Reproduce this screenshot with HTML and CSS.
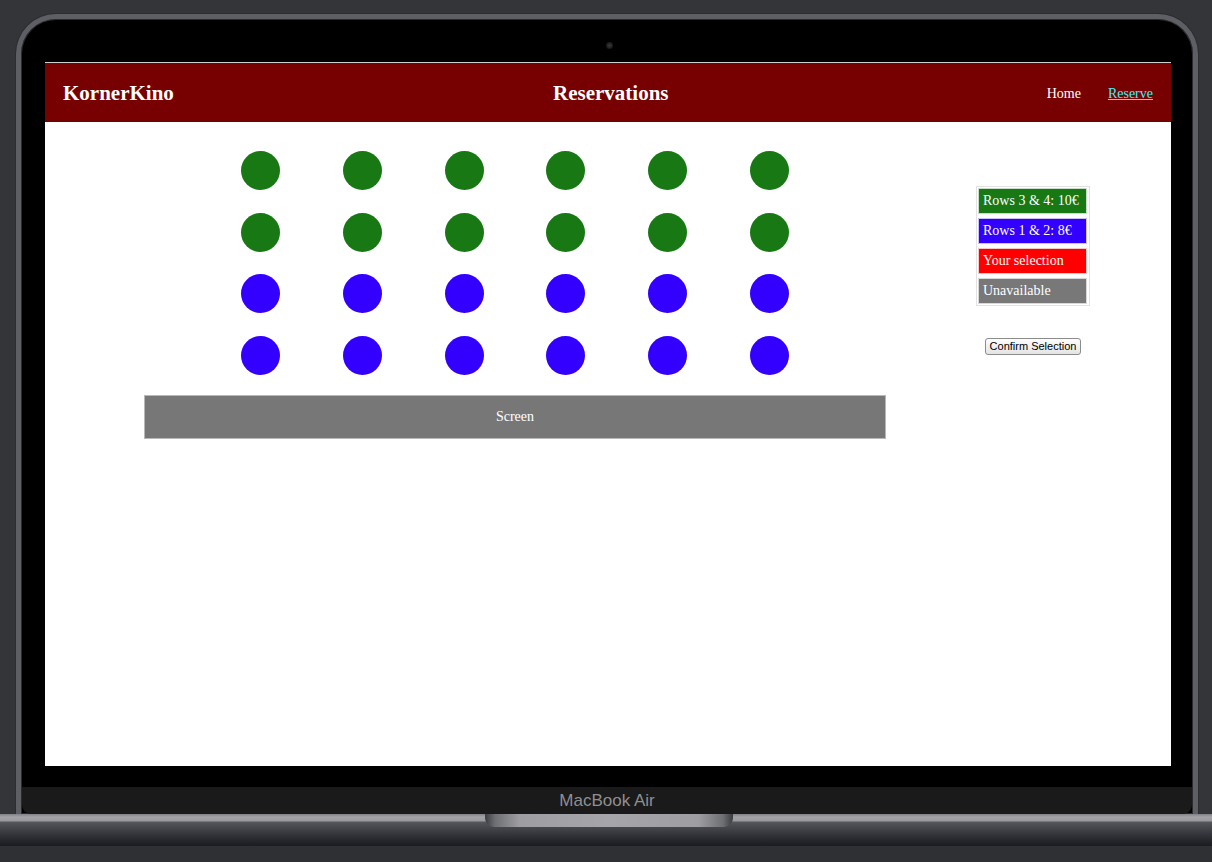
FILE: index.html
```html
<!DOCTYPE html>
<html lang="en">
<head>
<meta charset="utf-8">
<title>KornerKino – Reservations</title>
<link rel="stylesheet" href="styles.css">
</head>
<body>
<div class="desk">
  <div class="lid">
    <div class="bezel-top"><div class="camera"></div></div>
    <div class="screen">
      <header class="topbar">
        <div class="brand">KornerKino</div>
        <div class="title">Reservations</div>
        <nav class="nav">
          <a class="nav-link" href="#">Home</a>
          <a class="nav-link active" href="#">Reserve</a>
        </nav>
      </header>
      <main class="content">
        <section class="hall">
          <div class="seats">
            <span class="seat premium"></span><span class="seat premium"></span><span class="seat premium"></span><span class="seat premium"></span><span class="seat premium"></span><span class="seat premium"></span>
            <span class="seat premium"></span><span class="seat premium"></span><span class="seat premium"></span><span class="seat premium"></span><span class="seat premium"></span><span class="seat premium"></span>
            <span class="seat standard"></span><span class="seat standard"></span><span class="seat standard"></span><span class="seat standard"></span><span class="seat standard"></span><span class="seat standard"></span>
            <span class="seat standard"></span><span class="seat standard"></span><span class="seat standard"></span><span class="seat standard"></span><span class="seat standard"></span><span class="seat standard"></span>
          </div>
          <div class="screen-bar">Screen</div>
        </section>
        <aside class="side">
          <div class="legend">
            <div class="legend-item premium">Rows 3 &amp; 4: 10€</div>
            <div class="legend-item standard">Rows 1 &amp; 2: 8€</div>
            <div class="legend-item selected">Your selection</div>
            <div class="legend-item unavailable">Unavailable</div>
          </div>
          <button class="confirm" type="button">Confirm Selection</button>
        </aside>
      </main>
    </div>
    <div class="chin"><span class="model">MacBook Air</span></div>
  </div>
  <div class="base"><div class="notch"></div></div>
  <div class="floor"></div>
</div>
</body>
</html>
```

FILE: styles.css
```css
* { box-sizing: border-box; }

html, body {
  margin: 0;
  padding: 0;
  background: #343538;
  width: 1212px;
  height: 862px;
  overflow: hidden;
}

.desk {
  padding-top: 14px;
}

.lid {
  margin: 0 14px 0 16px;
  border: 5px solid #5e5f64;
  border-bottom: 0;
  border-radius: 40px 40px 0 0;
  background: #000;
  box-shadow: inset 0 0 0 1px #2a2b2e, 0 0 0 1px #2c2d30;
}

.bezel-top {
  height: 43px;
  padding-top: 23px;
  display: flex;
  justify-content: center;
}

.camera {
  width: 7px;
  height: 7px;
  border-radius: 50%;
  background: radial-gradient(circle at 50% 50%, #3a3a3c 0, #1c1c1e 60%, #0c0c0c 100%);
  margin-left: 4px;
}

.screen {
  margin: 0 22px 21px 24px;
  height: 704px;
  background: #fff;
  border-top: 1px solid #cfcfcf;
  overflow: hidden;
  font-family: "Liberation Serif", "Times New Roman", serif;
}

.topbar {
  height: 59px;
  background: #770000;
  display: flex;
  justify-content: space-between;
  align-items: center;
  padding: 2px 18px 0;
  color: #fff;
}

.brand,
.title {
  font-size: 21px;
  font-weight: bold;
}

.title { padding-left: 1px; }

.nav {
  display: flex;
  gap: 27px;
  font-size: 14px;
}

.nav-link {
  color: #fff;
  text-decoration: none;
}

.nav-link.active {
  color: #45eef2;
  text-decoration: underline;
}

.content {
  display: flex;
}

.hall {
  flex: none;
  width: 850px;
  padding: 29px 0 0 90px;
}

.seats {
  display: grid;
  grid-template-columns: repeat(6, 39px);
  column-gap: 62.8px;
  row-gap: 22.5px;
  width: 548px;
  margin: 0 auto;
}

.seat {
  width: 39px;
  height: 39px;
  border-radius: 50%;
}

.seat.premium { background: #187814; }
.seat.standard { background: #3300ff; }

.screen-bar {
  width: 742px;
  height: 44px;
  margin: 20.5px auto 0;
  background: #777;
  border: 1px solid #b8b8b8;
  color: #fff;
  font-size: 14px;
  line-height: 42px;
  text-align: center;
}

.side {
  flex: 1;
  display: flex;
  flex-direction: column;
  align-items: center;
  padding-top: 64px;
}

.legend {
  width: 114px;
  border: 1px solid #e2e2e2;
  padding: 1px 2px 1px 1px;
  display: flex;
  flex-direction: column;
  gap: 4px;
}

.legend-item {
  height: 26px;
  border: 1px solid #d6d6d6;
  padding-left: 4px;
  color: #fff;
  font-size: 14px;
  line-height: 24px;
  white-space: nowrap;
}

.legend-item.premium { background: #187814; border-color: #c9dcc8; }
.legend-item.standard { background: #3300ff; border-color: #c9c2f5; }
.legend-item.selected { background: #ff0000; border-color: #f5c8c8; }
.legend-item.unavailable { background: #787878; border-color: #d8d8d8; }

.confirm {
  margin-top: 32px;
  height: 17px;
  padding: 0 4px;
  font-family: "Liberation Sans", Arial, sans-serif;
  font-size: 11px;
  line-height: 15px;
  color: #000;
  background: linear-gradient(#fdfdfd, #e4e4e4);
  border: 1px solid #8c8c8c;
  border-radius: 3px;
}

.chin {
  height: 27px;
  margin: 0 1px;
  background: #1a1a1a;
  border-radius: 0 0 9px 9px;
  text-align: center;
  font-family: "Liberation Sans", Arial, sans-serif;
  font-size: 17px;
  line-height: 27px;
  color: #8f8f92;
}

.base {
  height: 32px;
  background: linear-gradient(to bottom,
    #808186 0, #a2a2a7 3px, #98989d 7px,
    #56575c 8px, #4a4b50 12px, #35363b 20px, #202126 29px, #1b1c20 32px);
}

.notch {
  width: 248px;
  height: 13px;
  margin-left: 485px;
  border-radius: 0 0 9px 9px;
  background: linear-gradient(to right,
    #3a3b3f 0, #6e6f73 4%, #9e9ea2 14%, #a6a6aa 50%, #9e9ea2 86%, #6e6f73 96%, #3a3b3f 100%);
}

.floor {
  height: 16px;
  background: #2f3033;
}
```
